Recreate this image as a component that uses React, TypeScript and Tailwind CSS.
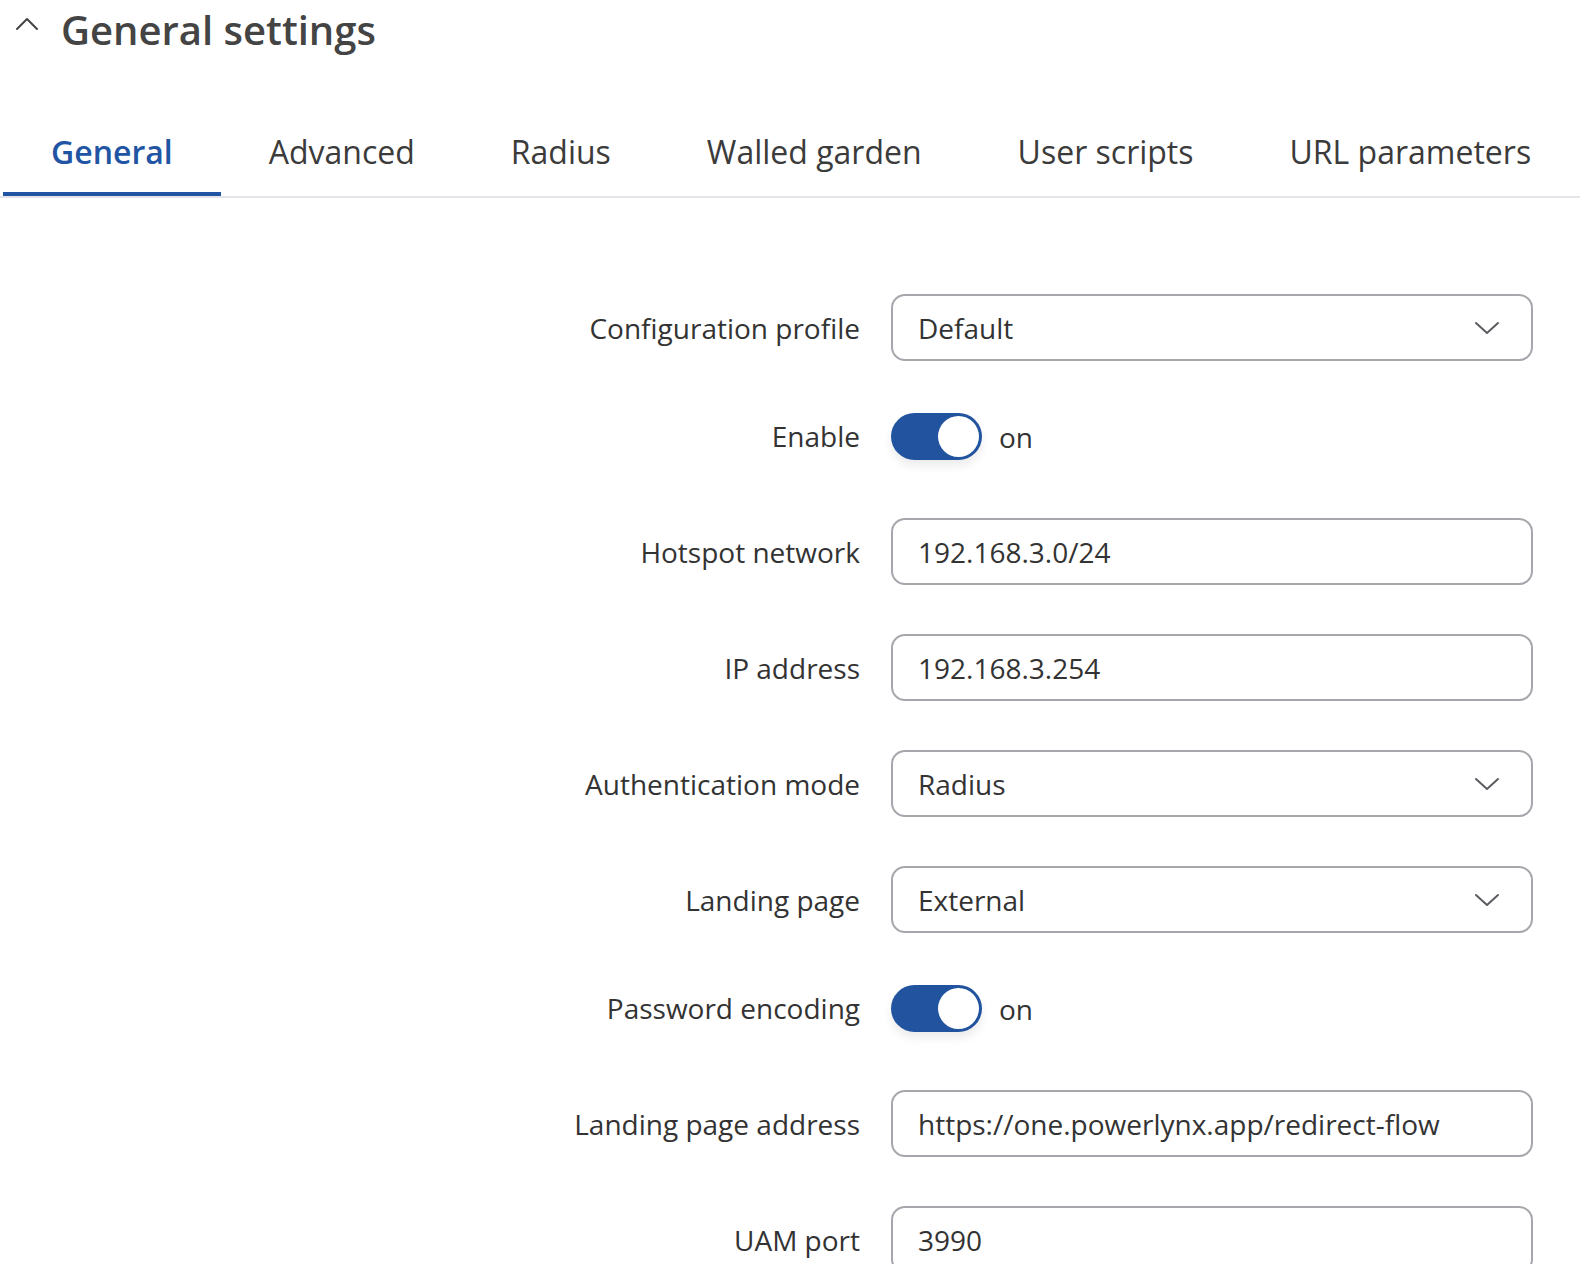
import React, { useState } from "react";

type Row =
  | { label: string; kind: "select"; value: string }
  | { label: string; kind: "input"; value: string }
  | { label: string; kind: "toggle"; value: boolean };

const tabs = [
  "General",
  "Advanced",
  "Radius",
  "Walled garden",
  "User scripts",
  "URL parameters",
];

const rows: Row[] = [
  { label: "Configuration profile", kind: "select", value: "Default" },
  { label: "Enable", kind: "toggle", value: true },
  { label: "Hotspot network", kind: "input", value: "192.168.3.0/24" },
  { label: "IP address", kind: "input", value: "192.168.3.254" },
  { label: "Authentication mode", kind: "select", value: "Radius" },
  { label: "Landing page", kind: "select", value: "External" },
  { label: "Password encoding", kind: "toggle", value: true },
  {
    label: "Landing page address",
    kind: "input",
    value: "https://one.powerlynx.app/redirect-flow",
  },
  { label: "UAM port", kind: "input", value: "3990" },
];

const ChevronDown = () => (
  <svg width="26" height="14" viewBox="0 0 26 14" fill="none">
    <path d="M2 2l11 10L24 2" stroke="#5a5c61" strokeWidth="2" strokeLinecap="round" strokeLinejoin="round" />
  </svg>
);

const Toggle = ({ on }: { on: boolean }) => (
  <div className="flex items-center gap-[17px]">
    <div
      className={`flex h-[47px] w-[91px] items-center rounded-full p-[3px] ${
        on ? "justify-end bg-[#21539f]" : "justify-start bg-[#c8cad0]"
      } shadow-[0_6px_10px_rgba(0,0,0,0.08)]`}
    >
      <div className="h-[41px] w-[41px] rounded-full bg-white" />
    </div>
    <span className="text-[28px] text-[#333]">{on ? "on" : "off"}</span>
  </div>
);

const Field = ({ row }: { row: Row }) => {
  if (row.kind === "toggle") return <Toggle on={row.value} />;
  return (
    <div className="flex h-[67px] items-center justify-between rounded-[14px] border-2 border-[#a5a7ac] bg-white pl-[25px] pr-[31px]">
      <span className="text-[28px] text-[#333]">{row.value}</span>
      {row.kind === "select" && <ChevronDown />}
    </div>
  );
};

export default function App() {
  const [active, setActive] = useState(0);

  return (
    <div
      className="h-[1264px] overflow-hidden bg-white text-[#333]"
      style={{ fontFamily: '"Open Sans", "Noto Sans", sans-serif' }}
    >
      <div className="flex h-[60px] items-center pl-[15px]">
        <svg width="24" height="14" viewBox="0 0 24 14" fill="none" className="mb-[12px]">
          <path d="M2 12L12 2l10 10" stroke="#444" strokeWidth="2" strokeLinecap="round" strokeLinejoin="round" />
        </svg>
        <h1 className="ml-[22px] text-[40px] font-semibold text-[#444]">General settings</h1>
      </div>

      <div className="mt-[70px] flex overflow-hidden border-b-2 border-[#e4e5e9] pl-[3px]">
        {tabs.map((t, i) => (
          <button
            key={t}
            onClick={() => setActive(i)}
            className={`-mb-[2px] shrink-0 whitespace-nowrap border-b-[6px] px-[48px] pb-[18px] text-[32px] leading-[44px] ${
              active === i
                ? "border-[#2155a3] font-semibold text-[#2155a3]"
                : "border-transparent text-[#3b3b3b]"
            }`}
          >
            {t}
          </button>
        ))}
      </div>

      <div className="mt-[96px] flex flex-col pr-[47px]">
        {rows.map((row) => (
          <div
            key={row.label}
            className={`grid grid-cols-[860px_1fr] gap-x-[31px] ${
              row.kind === "toggle" ? "h-[59px] items-start pt-[3px]" : "h-[67px] items-center"
            } mb-[49px]`}
          >
            <label
              className={`text-right text-[28px] text-[#333] ${
                row.kind === "toggle" ? "leading-[47px]" : ""
              }`}
            >
              {row.label}
            </label>
            <Field row={row} />
          </div>
        ))}
      </div>
    </div>
  );
}
